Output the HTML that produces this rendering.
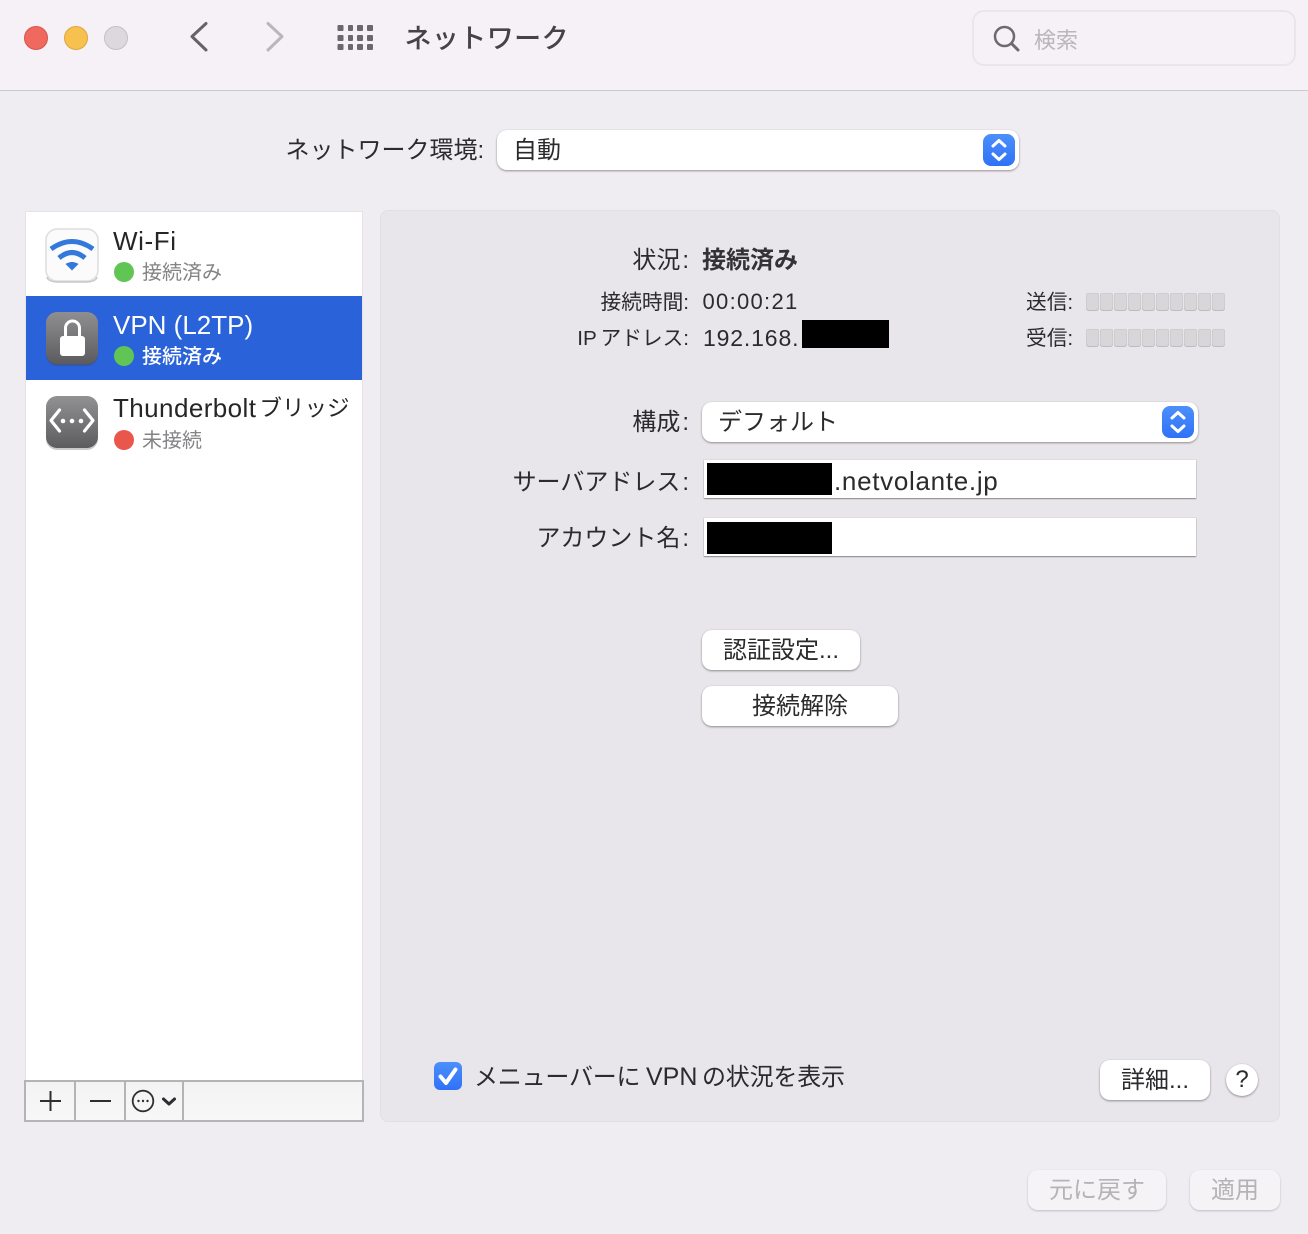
<!DOCTYPE html>
<html lang="ja"><head><meta charset="utf-8"><title>ネットワーク</title>
<style>
html,body{margin:0;padding:0;width:1308px;height:1234px;overflow:hidden;background:#f0edf2}
body{position:relative;font-family:"Liberation Sans","Noto Sans CJK JP",sans-serif;color:#2b2a2c}
.a{position:absolute}
.t{position:absolute;white-space:nowrap;line-height:32px;height:32px}
.r{text-align:right;right:619px}
.c{margin-left:2px}
.btn{position:absolute;background:#fff;border-radius:10px;box-shadow:0 1px 2px rgba(0,0,0,.38),0 0 1px rgba(0,0,0,.12);text-align:center;font-size:24px;color:#2b2a2c;white-space:nowrap}
.sel{position:absolute;background:#fff;border-radius:10px;box-shadow:0 1px 2px rgba(0,0,0,.38),0 0 1px rgba(0,0,0,.12)}
.inp{position:absolute;background:#fff;box-shadow:0 1px 1px rgba(0,0,0,.4),0 0 0 1px rgba(0,0,0,.04)}
.blk{position:absolute;background:#000}
.dis{position:absolute;background:#f5f3f6;border-radius:10px;box-shadow:0 1px 2px rgba(0,0,0,.2);text-align:center;line-height:42px;font-size:24px;color:#b5b3b6;white-space:nowrap}
.cell{position:absolute;width:13px;height:18px;background:#d9d6da;border-radius:2px 2px 3px 3px;box-shadow:inset 0 -1px 0 #bfbcc0,inset 0 0 0 1px #cfccd0}
</style></head><body>

<!-- title bar -->
<div class="a" style="left:0;top:0;width:1308px;height:90px;background:#f5f1f7;border-bottom:1px solid #cdc9ce"></div>
<div class="a" style="left:24px;top:26px;width:22px;height:22px;border-radius:50%;background:#f0695e;border:1px solid #d9524a"></div>
<div class="a" style="left:64px;top:26px;width:22px;height:22px;border-radius:50%;background:#f6c14f;border:1px solid #dfa638"></div>
<div class="a" style="left:104px;top:26px;width:22px;height:22px;border-radius:50%;background:#dcd8dd;border:1px solid #c4c0c5"></div>
<svg class="a" style="left:180px;top:14px" width="110" height="45" fill="none" stroke-linecap="round" stroke-linejoin="round" stroke-width="3">
<path d="M26 9.500 L12 22.500 L26 36" stroke="#656366"/>
<path d="M88 9.500 L102 22.500 L88 36" stroke="#b9b7ba"/>
</svg>
<svg class="a" style="left:337px;top:24px" width="38" height="28" fill="#6a686b">
<rect x="0.500" y="1" width="6" height="6" rx="1"/><rect x="11" y="1" width="5" height="6" rx="1"/><rect x="20" y="1" width="6" height="6" rx="1"/><rect x="30" y="1" width="6" height="6" rx="1"/>
<rect x="0.500" y="11" width="6" height="6" rx="1"/><rect x="11" y="11" width="5" height="6" rx="1"/><rect x="20" y="11" width="6" height="6" rx="1"/><rect x="30" y="11" width="6" height="6" rx="1"/>
<rect x="0.500" y="20" width="6" height="6" rx="1"/><rect x="11" y="20" width="5" height="6" rx="1"/><rect x="20" y="20" width="6" height="6" rx="1"/><rect x="30" y="20" width="6" height="6" rx="1"/>
</svg>
<div class="t" style="left:404.500px;top:23px;font-size:27px;letter-spacing:.4px;color:#454346;font-weight:500">ネットワーク</div>

<div class="a" style="left:972px;top:10px;width:320px;height:52px;border:2px solid #e9e5ea;border-radius:12px"></div>
<svg class="a" style="left:992px;top:24px" width="30" height="30" fill="none" stroke="#6c6a6d">
<circle cx="12.500" cy="12.500" r="9.500" stroke-width="2.500"/><path d="M20 20 L26 26" stroke-width="3" stroke-linecap="round"/>
</svg>
<div class="t" style="left:1034px;top:25px;font-size:22px;color:#b9b7ba">検索</div>

<!-- location -->
<div class="t" style="left:285.500px;top:135px;font-size:24px;width:200px">ネットワーク環境:</div>
<div class="sel" style="left:497px;top:130px;width:522px;height:40px"></div>
<div class="t" style="left:513px;top:135px;font-size:24px">自動</div>
<svg class="a" style="left:983px;top:134px" width="32" height="32" fill="none">
<defs><linearGradient id="g" x1="0" y1="0" x2="0" y2="1"><stop offset="0" stop-color="#4c8ffb"/><stop offset="1" stop-color="#2f72f7"/></linearGradient></defs>
<rect width="32" height="32" rx="8" fill="url(#g)"/>
<path d="M10 12 L16 6.500 L22 12 M10 20 L16 25.500 L22 20" stroke="#fff" stroke-width="3" stroke-linecap="round" stroke-linejoin="round"/>
</svg>

<!-- sidebar -->
<div class="a" style="left:26px;top:212px;width:336px;height:869px;background:#fff;box-shadow:0 0 0 1px #e6e3e7"></div>
<div class="a" style="left:26px;top:296px;width:336px;height:84px;background:#2a62d9"></div>

<svg class="a" style="left:44px;top:227px" width="56" height="58" fill="none">
<rect x="2" y="2" width="52" height="52" rx="11" fill="#fbfbfb" stroke="#dedcdf" stroke-width="1.500"/>
<path d="M3 50 Q4 54.500 13 55 L43 55 Q52 54.500 53 50" stroke="#c8c6c9" stroke-width="1.500"/>
<path d="M7 22 Q28 7 49 22" stroke="#3379dc" stroke-width="5"/>
<path d="M15 31 Q28 20 41 31" stroke="#3379dc" stroke-width="5"/>
<path d="M21.500 37 Q28 33 34.500 37 L28 43.500 Z" fill="#3379dc"/>
</svg>
<svg class="a" style="left:44px;top:311px" width="56" height="58" fill="none">
<defs><linearGradient id="d" x1="0" y1="0" x2="0" y2="1"><stop offset="0" stop-color="#8f8f92"/><stop offset="1" stop-color="#5c5c5e"/></linearGradient></defs>
<rect x="2" y="3" width="52" height="52" rx="11" fill="#4c4c4e" opacity=".45"/>
<rect x="2" y="1" width="52" height="52" rx="11" fill="url(#d)"/>
<path d="M21.500 26 V17 A7 7 0 0 1 35.500 17 V26" stroke="#fff" stroke-width="3"/>
<rect x="16" y="25" width="25" height="20" rx="3" fill="#fff"/>
</svg>
<svg class="a" style="left:44px;top:395px" width="56" height="58" fill="none">
<defs><linearGradient id="e" x1="0" y1="0" x2="0" y2="1"><stop offset="0" stop-color="#929295"/><stop offset="1" stop-color="#5c5c5e"/></linearGradient></defs>
<rect x="2" y="3" width="52" height="52" rx="11" fill="#77777a" opacity=".4"/>
<rect x="2" y="1" width="52" height="52" rx="11" fill="url(#e)"/>
<path d="M15.500 15 L7 25.500 L15.500 36 M40.500 15 L49 25.500 L40.500 36" stroke="#fff" stroke-width="3.200" stroke-linecap="round" stroke-linejoin="round"/>
<circle cx="19" cy="26" r="2.300" fill="#fff"/><circle cx="28" cy="26" r="2.300" fill="#fff"/><circle cx="37" cy="26" r="2.300" fill="#fff"/>
</svg>

<div class="t" style="left:113px;top:225px;font-size:26px;letter-spacing:.6px;color:#262527">Wi-Fi</div>
<div class="a" style="left:114px;top:262px;width:20px;height:20px;border-radius:50%;background:#60c554"></div>
<div class="t" style="left:142px;top:257px;font-size:20px;color:#858386">接続済み</div>

<div class="t" style="left:113px;top:309px;font-size:26px;color:#fff">VPN (L2TP)</div>
<div class="a" style="left:114px;top:346px;width:20px;height:20px;border-radius:50%;background:#60c554"></div>
<div class="t" style="left:142px;top:341px;font-size:20px;color:#fff;font-weight:500">接続済み</div>

<div class="t" style="left:113px;top:392px;font-size:26px;color:#262527;letter-spacing:.42px">Thunderbolt</div>
<div class="t" style="left:259.500px;top:393px;font-size:22.500px;color:#262527">ブリッジ</div>
<div class="a" style="left:114px;top:430px;width:20px;height:20px;border-radius:50%;background:#e9564b"></div>
<div class="t" style="left:142px;top:425px;font-size:20px;color:#858386">未接続</div>

<!-- sidebar toolbar -->
<div class="a" style="left:24px;top:1080px;width:336px;height:38px;background:linear-gradient(#f4f3f4,#f8f7f8);border:2px solid #b4b3b5"></div>
<div class="a" style="left:74px;top:1082px;width:2px;height:38px;background:#b4b3b5"></div>
<div class="a" style="left:124px;top:1082px;width:2px;height:38px;background:#b4b3b5"></div>
<div class="a" style="left:182px;top:1082px;width:2px;height:38px;background:#b4b3b5"></div>
<svg class="a" style="left:30px;top:1085px" width="160" height="32" fill="none" stroke="#2e2d2f">
<path d="M20.500 6 V26 M10 16 H31" stroke-width="2"/>
<path d="M60 16 H81" stroke-width="2"/>
<circle cx="113" cy="16" r="10.300" stroke-width="1.800"/>
<circle cx="108.500" cy="16" r="1.200" fill="#2e2d2f" stroke="none"/><circle cx="113" cy="16" r="1.200" fill="#2e2d2f" stroke="none"/><circle cx="117.500" cy="16" r="1.200" fill="#2e2d2f" stroke="none"/>
<path d="M133.500 14 L139 19 L144.500 14" stroke-width="3" stroke-linecap="round" stroke-linejoin="round"/>
</svg>

<!-- main panel -->
<div class="a" style="left:380px;top:210px;width:898px;height:910px;background:#e9e6eb;border:1px solid #e2dfe4;border-radius:8px"></div>

<div class="t r" style="top:245px;font-size:24px">状況<span class="c">:</span></div>
<div class="t" style="left:702px;top:245px;font-size:24px;font-weight:700;color:#333234">接続済み</div>
<div class="t r" style="top:287px;font-size:20.700px">接続時間:</div>
<div class="t" style="left:702.500px;top:286px;font-size:22px;letter-spacing:1.300px">00:00:21</div>
<div class="t r" style="top:323px;font-size:20.700px">IP<span style="margin-left:-2px"> </span>アドレス:</div>
<div class="t" style="left:703px;top:322px;font-size:23px;letter-spacing:.85px">192.168.</div>
<div class="blk" style="left:802px;top:320px;width:87px;height:28px"></div>

<div class="t" style="left:1026px;top:287px;font-size:20.700px">送信:</div>
<div class="t" style="left:1026px;top:323px;font-size:20.700px">受信:</div>
<div class="a" style="left:1086px;top:293px;width:140px;height:18px">
<div class="cell" style="left:0"></div><div class="cell" style="left:14px"></div><div class="cell" style="left:28px"></div><div class="cell" style="left:42px"></div><div class="cell" style="left:56px"></div><div class="cell" style="left:70px"></div><div class="cell" style="left:84px"></div><div class="cell" style="left:98px"></div><div class="cell" style="left:112px"></div><div class="cell" style="left:126px"></div>
</div>
<div class="a" style="left:1086px;top:329px;width:140px;height:18px">
<div class="cell" style="left:0"></div><div class="cell" style="left:14px"></div><div class="cell" style="left:28px"></div><div class="cell" style="left:42px"></div><div class="cell" style="left:56px"></div><div class="cell" style="left:70px"></div><div class="cell" style="left:84px"></div><div class="cell" style="left:98px"></div><div class="cell" style="left:112px"></div><div class="cell" style="left:126px"></div>
</div>

<div class="t r" style="top:407px;font-size:24px">構成<span class="c">:</span></div>
<div class="sel" style="left:702px;top:402px;width:496px;height:40px"></div>
<div class="t" style="left:718px;top:407px;font-size:24px">デフォルト</div>
<svg class="a" style="left:1162px;top:406px" width="32" height="32" fill="none">
<rect width="32" height="32" rx="8" fill="url(#g)"/>
<path d="M10 12 L16 6.500 L22 12 M10 20 L16 25.500 L22 20" stroke="#fff" stroke-width="3" stroke-linecap="round" stroke-linejoin="round"/>
</svg>

<div class="t r" style="top:467px;font-size:24px">サーバアドレス<span class="c">:</span></div>
<div class="inp" style="left:704px;top:460px;width:492px;height:38px"></div>
<div class="blk" style="left:707px;top:463px;width:125px;height:32px"></div>
<div class="t" style="left:834px;top:465px;font-size:26px;letter-spacing:.7px">.netvolante.jp</div>

<div class="t r" style="top:523px;font-size:24px">アカウント名<span class="c">:</span></div>
<div class="inp" style="left:704px;top:518px;width:492px;height:38px"></div>
<div class="blk" style="left:707px;top:522px;width:125px;height:32px"></div>

<div class="btn" style="left:702px;top:630px;width:158px;height:40px;line-height:41px">認証設定...</div>
<div class="btn" style="left:702px;top:686px;width:196px;height:40px;line-height:41px">接続解除</div>

<svg class="a" style="left:434px;top:1062px" width="28" height="28" fill="none">
<rect width="28" height="28" rx="6" fill="url(#g)"/>
<path d="M6.500 14.500 L12 21 L21.500 7.500" stroke="#fff" stroke-width="4" stroke-linecap="round" stroke-linejoin="round"/>
</svg>
<div class="t" style="left:474px;top:1062px;font-size:24px;letter-spacing:-.2px">メニューバーに</div>
<div class="t" style="left:646px;top:1061px;font-size:25px">VPN</div>
<div class="t" style="left:702px;top:1062px;font-size:24px;letter-spacing:-.2px">の状況を表示</div>

<div class="btn" style="left:1100px;top:1060px;width:110px;height:40px;line-height:41px">詳細...</div>
<div class="btn" style="left:1226px;top:1064px;width:32px;height:32px;border-radius:50%;line-height:32px;font-size:24px">?</div>

<div class="dis" style="left:1028px;top:1170px;width:138px;height:40px">元に戻す</div>
<div class="dis" style="left:1190px;top:1170px;width:90px;height:40px">適用</div>

</body></html>
